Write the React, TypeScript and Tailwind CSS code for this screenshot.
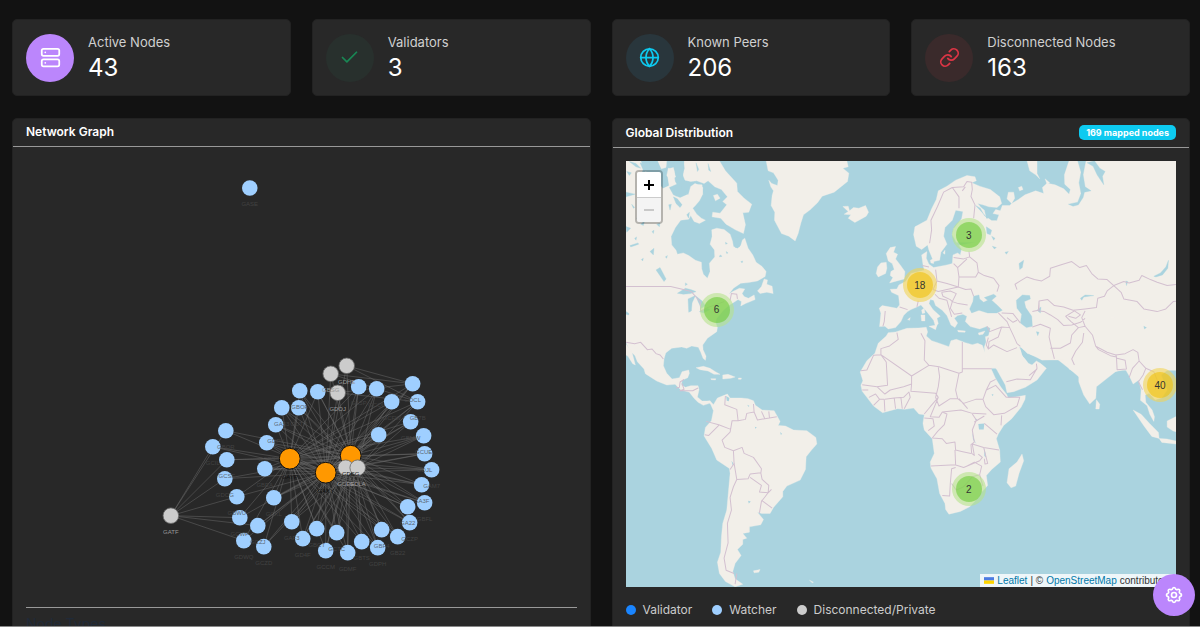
import { Check, Globe, Link as LinkIcon, Server } from 'lucide-react'
import { TbSettings } from 'react-icons/tb'

const STATS = [
  { label: 'Active Nodes', value: 43, icon: Server, style: 'bg-[#bb86fc] text-white' },
  { label: 'Validators', value: 3, icon: Check, style: 'bg-[#28302d] text-[#198754]' },
  { label: 'Known Peers', value: 206, icon: Globe, style: 'bg-[#29363c] text-[#0dcaf0]' },
  { label: 'Disconnected Nodes', value: 163, icon: LinkIcon, style: 'bg-[#3a2a2b] text-[#dc3545]' },
]

const LEGEND = [
  { label: 'Validator', color: 'bg-[#1a85ff]' },
  { label: 'Watcher', color: 'bg-[#9fcfff]' },
  { label: 'Disconnected/Private', color: 'bg-[#cccccc]' },
]

const CLUSTERS = [
  { count: 3, x: 343, y: 74, big: false },
  { count: 18, x: 294, y: 124, big: true },
  { count: 6, x: 91, y: 149, big: false },
  { count: 40, x: 534, y: 224, big: true },
  { count: 2, x: 343, y: 328, big: false },
]

type Node = [x: number, y: number, id: string]

const VALIDATORS: Node[] = [
  [351, 456, 'GDSG'], [290, 459, 'GAYP'], [326, 473, 'GAXY'],
]

// nodes around the three validators
const WATCHERS: Node[] = [
  [300, 391, 'GBOF'], [318, 392, ''], [359, 387, 'GA5P'], [377, 389, 'GCQL'], [413, 384, 'GDCL'],
  [418, 402, 'GB7B'], [392, 402, 'GCFW'], [411, 422, 'GBMW'], [379, 435, ''], [424, 436, 'GCUE'],
  [425, 454, 'GDJL'], [432, 470, 'GAM7'], [422, 485, 'GA3F'], [425, 503, 'GBFL'], [408, 507, 'GA22'],
  [410, 523, 'GCZP'], [398, 537, 'GB22'], [382, 530, 'GBF4'], [378, 548, 'GDPH'], [362, 542, 'GBTS'],
  [348, 553, 'GDMF'], [337, 533, 'GCTC'], [326, 551, 'GCCM'], [317, 529, 'GBCT'], [303, 539, 'GD4F'],
  [292, 522, 'GAF3'], [274, 498, 'GCKL'], [265, 469, 'GBEA'], [267, 443, 'GCPS'], [276, 425, 'GDPV'],
  [282, 408, 'GA53'], [299, 408, 'GDTR'],
]

const OUTER: Node[] = [
  [226, 431, 'GBOR'], [213, 447, 'GCIL'], [227, 460, 'GCSF'], [225, 479, 'GDCG'], [237, 497, 'GBWU'],
  [240, 518, 'GCWP'], [258, 526, 'GCZJ'], [244, 541, 'GDWQ'], [264, 547, 'GCZD'],
]

const PRIVATE: Node[] = [
  [347, 366, 'GDHE'], [331, 374, 'GBSG'], [338, 393, 'GDOJ'], [346, 468, 'GCEE'], [358, 468, 'GDLA'],
  [171, 516, 'GATF'],
]

const LONER: Node = [250, 188, 'GASE']

const EDGES: [Node, Node][] = [
  ...[...WATCHERS, ...OUTER].flatMap((w, i) =>
    VALIDATORS.filter((_, v) => w[0] > 260 || (i + v) % 3 !== 0).map(v => [w, v] as [Node, Node])),
  ...WATCHERS.flatMap((w, i) => [[w, PRIVATE[3 + (i % 2)]]] as [Node, Node][]),
  ...OUTER.slice(0, 8).map(w => [w, PRIVATE[5]] as [Node, Node]),
  ...PRIVATE.slice(0, 3).flatMap(p =>
    [WATCHERS[4], WATCHERS[5], VALIDATORS[0], VALIDATORS[2]].map(t => [p, t] as [Node, Node])),
]

function NetworkGraph() {
  return (
    <svg viewBox="13 147 577 460" className="block w-full" role="img" aria-label="Network graph">
      <g stroke="#707070" strokeOpacity="0.5" strokeWidth="0.9">
        {EDGES.map(([a, b], i) => <line key={i} x1={a[0]} y1={a[1]} x2={b[0]} y2={b[1]} />)}
      </g>
      <g fill="#9fcfff">
        {[LONER, ...OUTER, ...WATCHERS].map(([x, y]) => <circle key={`${x}-${y}`} cx={x} cy={y} r="7.8" />)}
      </g>
      <g fill="#ff9800" stroke="#111" strokeWidth="1">
        {VALIDATORS.map(([x, y]) => <circle key={x} cx={x} cy={y} r="10.4" />)}
      </g>
      <g fill="#cccccc" stroke="#666" strokeWidth="0.8">
        {PRIVATE.map(([x, y]) => <circle key={x} cx={x} cy={y} r="7.8" />)}
      </g>
      <g fontSize="6" textAnchor="middle" className="font-[Liberation_Sans]">
        <g fill="#484848" fillOpacity="0.8">
          {[LONER, ...OUTER, ...WATCHERS].map(([x, y, id]) => <text key={`${x}-${y}`} x={x} y={y + 18}>{id}</text>)}
        </g>
        <g fill="#111">
          {VALIDATORS.map(([x, y, id]) => <text key={id} x={x} y={y + 20}>{id}</text>)}
        </g>
        <g fill="#999">
          {PRIVATE.map(([x, y, id]) => <text key={id} x={x} y={y + 18}>{id}</text>)}
        </g>
      </g>
    </svg>
  )
}

const LAND = '#f2efe9'
const SEA = '#aad3df'

function WorldMap() {
  return (
    <svg viewBox="18 18 1650 1278" preserveAspectRatio="xMidYMid slice" className="block h-full w-full" role="img" aria-label="World map">
      <rect x="0" y="0" width="1700" height="1320" fill={SEA} />
      <g fill={LAND} stroke={LAND} strokeWidth="1" strokeLinejoin="round">
        {/* north and central america */}
        <path d="M18 18H62L70 40 62 62 78 50 90 66 88 92 112 88 130 98 145 90 140 62 145 40 160 50 165 80 175 98 160 110 168 125 185 112 205 120 212 95 225 86 248 98 246 122 238 138 226 152 218 160 230 178 244 190 256 196 238 206 222 200 212 182 206 193 182 196 166 218 153 245 155 270 168 286 172 298 190 294 206 302 226 316 244 322 245 342 250 358 262 370 270 350 268 325 284 306 283 285 270 268 276 245 275 225 290 220 312 224 330 238 337 258 340 275 352 281 362 272 367 255 374 250 384 280 398 300 408 322 426 335 438 350 435 365 412 378 385 383 362 385 340 400 326 418 338 410 358 400 374 402 366 416 372 425 385 430 402 420 405 434 376 446 362 453 364 440 354 434 338 444 328 450 310 466 290 490 286 502 292 518 290 530 262 550 248 570 249 584 258 604 256 616 249 610 242 592 235 577 215 573 200 580 185 576 155 580 137 594 132 612 130 632 140 655 156 672 178 668 186 650 206 645 208 655 203 668 186 676 184 690 196 697 212 692 234 692 237 704 232 726 246 738 260 738 270 737 280 750 268 745 250 751 234 742 222 730 208 712 182 704 165 688 140 690 110 678 76 656 72 642 52 620 45 602 28 585 18 562Z" />
        <path d="M18 568L36 592 46 630 38 626 24 604 18 600Z" />
        <path d="M190 18H298L316 48 350 85 352 110 372 130 395 148 386 172 368 174 376 210 370 236 346 225 318 208 302 190 276 186 278 172 300 175 320 150 308 140 322 126 304 104 284 96 264 78 252 86 230 78 212 80 195 76 188 60 194 40Z" />
        <path d="M112 18H140L138 38 124 42ZM144 42L160 38 168 66 155 72ZM280 122L292 118 300 130 286 138ZM222 88L246 90 248 120 232 110Z" />
        <path d="M438 18L444 48 460 54 474 76 472 92 455 86 446 76 452 96 460 108 456 122 453 152 464 172 463 196 484 236 506 244 525 258 534 236 542 205 550 180 570 165 592 144 606 124 642 112 682 80 686 55 668 40 684 36 680 18Z" />
        <path d="M668 155L684 154 688 168 700 158 716 160 736 152 745 172 738 184 704 203 684 190 692 180 672 178 684 170Z" />
        <path d="M412 408L424 395 432 372 442 375 440 388 456 394 459 416 440 412 420 416Z" />
        <path d="M228 638L250 634 270 640 286 650 300 658 282 658 264 648 240 644ZM308 660L324 658 345 666 332 670 308 672ZM272 671L287 671 286 675 274 674ZM355 669L364 669 363 673 355 673Z" />
      </g>
      <g fill={SEA} stroke={SEA} strokeWidth="1">
        {/* canadian straits and lakes */}
        <path d="M18 112L45 118 18 126ZM90 18L112 18 124 50 142 66 146 92 128 100 120 84 98 70 88 50ZM60 24L78 30 84 48 70 46ZM86 92L98 96 96 118 90 112ZM18 215L32 220 20 232ZM66 158L98 144 104 150 74 166ZM30 272L54 264 56 268 32 276ZM108 345L120 338 138 372 132 380ZM90 290L102 280 100 300ZM62 208L74 198 70 212ZM172 415L196 400 212 404 228 410 212 416 190 418ZM204 432L226 422 216 444 214 468 206 472ZM228 424L246 438 256 452 244 460 234 440ZM238 470L262 460 270 464 250 474ZM148 98L180 84 186 104 202 118 180 128 160 120ZM340 250L362 244 358 276 346 278Z" />
        <path d="M162 18H192L188 70 196 84 178 92 166 60ZM160 126L172 132 186 150 180 158 168 146ZM146 150L154 148 150 166ZM28 20L48 26 62 40 48 36ZM20 50L34 54 28 62ZM228 24L236 44 232 50ZM264 26L272 50 266 46Z" />
        <path d="M35 148L44 158 40 160ZM50 190L60 182 58 190ZM200 180L208 172 206 190ZM110 208L120 205 118 216ZM316 262L322 266 317 268ZM300 300L306 304 298 306ZM18 470L27 476 26 480 18 478ZM196 384L202 388 196 392ZM96 230L102 226 100 236ZM64 314L70 310 68 318ZM136 306L142 302 140 310ZM44 250L50 246 48 256ZM318 290L324 294 320 296ZM362 320L368 318 366 324Z" />
      </g>

      {/* europe and asia */}
      <g transform="translate(690 0)">
        <g fill={LAND} stroke={LAND} strokeWidth="1" strokeLinejoin="round">
          <path d="M350 62L374 66 378 78 364 84 388 94 420 104 448 126 454 146 440 158 416 156 398 150 382 146 392 158 402 166 408 192 424 186 440 196 446 180 428 176 436 164 450 168 456 152 478 152 484 146 470 132 474 112 490 112 493 130 484 146 504 134 524 120 556 108 580 116 576 98 590 85 614 90 640 102 656 118 660 104 643 88 642 60 656 18H986V646L930 645 800 646 738 680 700 678 655 640 620 612 575 615 540 598 512 575 500 640 405 640 402 575 414 545 420 520 410 514 388 522 360 515 345 500 350 484 338 478 322 482 312 490 322 504 314 518 302 510 290 482 276 466 256 452 250 436 240 434 236 446 248 464 270 484 260 490 264 506 256 516 250 496 226 466 212 450 200 456 182 464 172 470 160 482 152 500 136 518 114 522 104 514 88 515 92 475 87 460 96 452 140 460 148 450 145 422 124 412 120 403 140 402 146 390 166 380 182 356 206 350 222 346 218 328 214 300 230 290 228 310 236 328 250 338 290 330 306 326 308 300 322 294 330 300 334 282 326 272 375 262 340 262 318 262 306 240 310 222 334 192 338 170 316 166 306 196 284 218 280 244 290 268 272 292 268 316 250 320 236 286 232 270 214 284 198 274 190 240 194 216 230 196 244 162 258 134 264 108 290 94 316 76Z" />
          <path d="M120 278L136 275 130 292 142 298 136 312 150 330 164 350 162 372 140 378 118 384 128 368 120 362 122 350 132 344 126 326 114 318 108 296ZM82 336L92 324 108 322 110 340 106 356 84 366 78 356Z" />
          <path d="M530 18H560L560 56 568 72 556 60 538 48ZM584 72L598 84 590 88ZM504 98L514 94 518 104 508 108ZM214 465L222 460 224 474 216 476ZM212 480L224 480 224 498 214 498ZM236 514L260 510 256 524ZM322 526L345 528 344 532 324 531ZM384 534L404 528 398 538 386 540ZM172 494L180 488 178 496ZM240 316L252 310 250 326 242 324ZM278 294L284 286 284 298Z" />
          <path d="M405 545L415 605 440 645 465 690 470 713 490 710 525 697 560 675 588 640 570 625 558 618 545 630 534 625 515 600 510 575 530 595 560 605 575 615 640 615 655 630 656 642 672 650 685 645 685 680 700 720 718 747 736 730 738 695 770 670 795 650 825 643 838 666 848 687 865 675 872 705 870 736 890 752 898 778 910 799 912 785 905 765 886 742 884 720 896 715 914 734 934 728 950 705 940 680 932 660 950 646 986 644V500L640 480Z" />
          <path d="M738 734L748 748 746 762 736 762ZM848 765L872 778 898 806 924 832 926 850 904 844 880 812ZM926 850L950 852 986 860V868L934 862ZM950 798L978 784H986V832L968 828 950 816Z" />
        </g>
        <g fill={SEA} stroke={SEA} strokeWidth="1">
          <path d="M682 18L692 52 686 84 692 116 682 142 654 148 668 154 684 150 698 128 702 112 722 108 704 96 698 60 706 18ZM710 24L728 34 740 60 760 90 756 64 764 50 748 40 732 18ZM358 462L368 440 370 424 386 420 388 432 400 442 412 436 402 428 430 418 438 424 424 436 440 450 456 466 440 474 412 474 386 466 364 474ZM498 436L516 420 538 422 540 432 522 440 526 458 544 484 546 514 528 518 510 504 514 478 500 460ZM508 576L528 594 534 612 520 606ZM376 152L390 160 402 182 412 190 422 180 436 190 440 196 424 196 406 184ZM408 216L424 226 420 240 410 236ZM424 244L434 250 430 256ZM910 364L930 354 946 336 954 316 952 340 936 360 916 366ZM690 430L704 420 730 422 700 426 694 436ZM506 326L520 316 516 338 508 344ZM560 466L572 456 570 474ZM558 530L566 532 562 542ZM880 514L888 518 882 522ZM826 378L832 380 828 392ZM464 292L474 290 468 298ZM426 274L438 278 432 282Z" />
        </g>
        <g fill="none" stroke="#d3c0d0" strokeWidth="3" strokeLinejoin="round">
          <path d="M238 265L244 225 242 196 262 154 280 112 306 98 326 126 326 160M306 98L340 96 350 80 364 82 366 104 362 125 374 150 370 190M345 96L336 108M356 290L358 306 340 312 310 308M358 306L380 324 384 352 376 366 326 366 322 338 350 312M322 338L310 326M256 344L260 378 290 386 324 396 326 366M260 378L248 404 264 410 290 404 324 396M384 352L402 362 430 370 446 392 440 410M324 396L346 404 362 402 370 424M274 412L300 408 318 416 306 440 324 446 352 450M274 412L278 424 300 434 306 440 300 460 312 478 336 474M254 418L266 430 290 436 296 458M296 458L304 486M200 456L204 438M105 468L102 500 98 514M148 456L172 464M216 332L236 336" />
          <path d="M500 404L494 388 510 378 530 366 552 374 574 378 598 364 600 340 630 330 664 320 688 338 708 332 724 356 742 372 770 374 790 392 770 408 762 424 742 430 738 458 704 462 668 466 640 456 612 452 592 434 566 438 564 466 546 470M790 392L820 380 836 384 866 376 874 362 900 374 920 382 950 392 986 388M790 392L812 412 820 432 860 440 880 462 920 470 946 462 968 440 986 438M566 438L566 468 582 470 600 480 622 494 640 512 664 510 690 502 704 490M546 516L570 508 600 520 596 546 604 580 612 612M600 580L630 580 660 564 664 540 684 518 704 514 726 540 736 574 770 592 796 600 824 596 848 584 862 592 866 618 846 640 836 668M684 518L662 500 646 484 672 468 690 480 676 490 654 484M704 514L694 488 704 468M700 534L696 562 676 588 664 612 672 630M736 574L744 584 780 602 798 606 796 598M798 606L800 644 828 642 824 616 800 610M866 618L886 640 878 660 864 680 876 704M886 640L910 650 922 680 914 704" />
          <path d="M410 514L418 530 454 516 478 518 470 500 444 474M454 474L488 476 510 504M470 488L488 502 500 496M478 518L492 548 500 566 510 574M454 516L444 546 416 560 414 582 430 570 470 590 500 578M414 582L408 570 414 548M468 680L500 672 540 674 560 640 558 626M536 662L560 642" />
        </g>
      </g>

      {/* africa */}
      <g transform="translate(690 465)">
        <path fill={LAND} stroke={LAND} d="M108 78L114 68 136 66 170 55 206 54 228 52 232 66 228 78 244 92 262 98 296 110 302 92 318 88 345 98 366 104 382 100 396 106 402 122 412 150 425 182 436 206 452 232 468 252 474 264 500 260 525 256 524 268 512 292 484 326 460 346 444 372 438 386 448 420 450 456 424 478 408 496 412 526 394 546 384 562 358 590 330 604 296 612 286 598 284 580 268 550 260 506 242 474 240 456 252 430 246 386 222 360 218 340 222 314 206 312 190 294 164 298 142 296 97 308 70 288 50 262 36 244 32 226 38 212 30 186 50 152 74 130 84 100ZM515 432L520 452 506 490 496 528 482 533 470 518 476 476 500 456Z" />
        <path fill={SEA} d="M384 342L402 340 400 358 386 358ZM366 366L372 390 378 402 368 388ZM402 414L408 442 402 438ZM378 326L382 332 374 330ZM424 252L430 254 426 258Z" />
        <path fill="none" stroke="#d3c0d0" strokeWidth="3" strokeLinejoin="round" d="M140 68L144 88 118 108 92 116 92 134 70 136 50 180 32 182M92 134L184 198 236 166 222 150 224 92 212 70M236 166L266 170 326 190 336 186 336 96M336 176H424M326 190L316 240 322 266 300 266 266 288 256 262 264 230 268 200 264 172M184 198L184 222 160 230 120 240 104 252 80 230 36 224M92 134L108 156 112 226 80 230M36 240L54 240M56 262L76 252 88 268 70 286M88 268L102 268 104 304M104 268L132 264 160 262 176 246 180 262 162 296M132 264L136 296M152 262L156 296M184 222L182 244 256 250 264 262 240 290 222 312M264 262L240 320 266 322 276 306 332 300 366 310 408 312M322 266L340 280 376 268 398 268 406 290 430 314 462 310 500 288 508 262 468 262M326 266L352 296M408 240L398 268M408 240L420 216 436 208M408 240L436 226 468 262M452 346L454 316M222 324L248 326 252 348 234 362M276 306L290 312 282 344 262 364 246 384M246 384L276 386 288 400 314 396 316 420 334 424 362 430M366 312L378 330 366 360 372 396 362 404 364 430 372 436 366 402 400 412 446 420M372 336L402 318M314 420L316 464 242 468M314 464L340 472 388 452 396 442 384 432M316 472L304 476 300 520 298 558 276 556M304 520L318 540 340 530 366 500 388 494 394 468 372 456 342 472M388 494L398 528M400 412L408 444 412 460 404 462 402 446M402 340L440 372" />
      </g>

      {/* south america */}
      <g transform="translate(0 615)">
        <path fill={LAND} stroke={LAND} d="M268 124L280 134 292 114 312 106 322 102 330 114 364 114 384 116 400 122 406 136 426 150 462 152 480 184 474 196 496 198 520 210 560 212 587 232 590 252 574 270 558 290 556 328 540 360 500 378 488 394 488 410 460 442 450 460 425 460 412 456 430 478 422 494 388 500 388 516 368 520 380 534 368 538 368 552 352 568 363 586 345 610 338 634 345 656 368 672 345 680 316 664 298 640 292 606 302 576 304 530 308 490 320 450 330 340 328 325 290 300 275 265 252 228 256 202 274 182 280 152ZM400 632L420 628 416 636 402 638ZM568 660L580 666 576 668Z" />
        <path fill={SEA} d="M318 108L328 114 326 124 320 122ZM384 422L392 424 386 430ZM334 302L340 310 338 316ZM480 216L486 222 482 224ZM382 134L388 138 384 140ZM404 200L410 202 406 206Z" />
        <path fill="none" stroke="#d3c0d0" strokeWidth="3" strokeLinejoin="round" d="M168 84L178 82 180 66 192 58M186 70L192 88 180 92 218 92 234 84M316 108L314 134 350 148 354 182 336 182 330 216M258 184L296 194 332 208M296 196L266 226 254 224M330 216L306 240 314 262 340 272 342 310 330 328M354 182L376 178 380 160 402 156 400 132M402 156L412 180 434 176 424 154M434 176L448 174 446 154M448 174L470 170M340 272L366 262 372 280 400 292 424 326 422 340M342 310L350 358 384 356 390 342 422 338 426 358 446 376 444 398 418 396 424 376 390 352M350 358L340 380 330 412 334 450 322 490 324 548 312 594 318 630 342 640M444 398L454 388M424 420L456 444M444 398L424 424 418 458M350 640L345 672" />
      </g>

      <path fill="none" stroke="#d3c0d0" strokeWidth="3" d="M18 395H152L190 404 214 410 240 440 242 468 262 458M262 458L312 440M330 436L334 416 350 418 352 432M18 562L44 566 62 562 82 584 96 582 108 596 120 600 130 612" />
    </svg>
  )
}

function Cluster({ count, x, y, big }: { count: number; x: number; y: number; big: boolean }) {
  return (
    <div
      className={`absolute flex h-[34px] w-[34px] -translate-x-1/2 -translate-y-1/2 items-center justify-center rounded-full ${big ? 'bg-[#f1d357]/60' : 'bg-[#b5e28c]/60'}`}
      style={{ left: `${x / 5.5}%`, top: `${y / 4.26}%` }}
    >
      <div className={`flex h-[26px] w-[26px] items-center justify-center rounded-full font-[Liberation_Sans,sans-serif] text-[10px] text-[#333] ${big ? 'bg-[#f0c20c]/60' : 'bg-[#6ecc39]/60'}`}>
        {count}
      </div>
    </div>
  )
}

export default function App() {
  return (
    <div className="h-screen overflow-hidden border-b border-[#888] bg-[#121212] pl-3 pr-[10px] pt-[19px] font-[Inter,sans-serif] text-white">
      <div className="grid grid-cols-4 gap-[21px]">
        {STATS.map(({ label, value, icon: Icon, style }) => (
          <div key={label} className="flex h-[77px] items-center gap-[14px] rounded-[5px] border border-[#222] bg-[#282828] px-[13px]">
            <div className={`flex h-12 w-12 shrink-0 items-center justify-center rounded-full ${style}`}>
              <Icon size={21} />
            </div>
            <div>
              <div className="text-[13px] leading-5 text-[#d0d0d0]">{label}</div>
              <div className="text-2xl leading-8">{value}</div>
            </div>
          </div>
        ))}
      </div>

      <div className="mt-[22px] grid grid-cols-2 items-start gap-[21px]">
        <section className="rounded-t-[5px] border border-[#222] bg-[#282828]">
          <h2 className="border-b border-[#999] px-[13px] pb-1 pt-[3px] text-xs font-semibold leading-5">Network Graph</h2>
          <NetworkGraph />
          <div className="mx-[13px] h-40 border-t border-[#999] pt-[6px] text-sm leading-5 text-[#202a38]">Node Types</div>
        </section>

        <section className="rounded-t-[5px] border border-[#222] bg-[#282828]">
          <div className="flex items-center justify-between border-b border-[#999] px-[13px] pb-1 pt-[3px]">
            <h2 className="text-xs font-semibold leading-[21px]">Global Distribution</h2>
            <span className="rounded-[5px] bg-[#0dcaf0] px-[7px] text-[9px] font-bold leading-[15px]">169 mapped nodes</span>
          </div>
          <div className="px-[13px] pt-[13px]">
            <div className="relative h-[426px] overflow-hidden">
              <WorldMap />
              <div className="absolute left-[9px] top-[9px] overflow-hidden rounded border-2 border-black/25">
                <button aria-label="Zoom in" className="flex h-[26px] w-6 items-center justify-center border-b border-[#ccc] bg-white">
                  <svg viewBox="0 0 12 12" className="h-3 w-3"><path d="M6 1v10M1 6h10" stroke="#000" strokeWidth="2" /></svg>
                </button>
                <button aria-label="Zoom out" disabled className="flex h-6 w-6 items-center justify-center bg-[#f4f4f4]">
                  <svg viewBox="0 0 12 12" className="h-3 w-3"><path d="M1 6h10" stroke="#bbb" strokeWidth="1.5" /></svg>
                </button>
              </div>
              {CLUSTERS.map(c => <Cluster key={c.count} {...c} />)}
              <div className="absolute bottom-0 right-0 flex items-center gap-[3px] bg-white/80 px-1 font-[Liberation_Sans,sans-serif] text-[10px] leading-[13px] text-[#333]">
                <svg viewBox="0 0 12 8" className="h-[7px] w-[10px]">
                  <path fill="#4c7be1" d="M0 0h12v4H0z" />
                  <path fill="#ffd500" d="M0 4h12v4H0z" />
                </svg>
                <a href="#leaflet" className="text-[#0078a8]">Leaflet</a>
                <span>| ©</span>
                <a href="#osm" className="text-[#0078a8]">OpenStreetMap</a>
                <span>contributors</span>
              </div>
            </div>
            <ul className="flex h-40 gap-5 pt-[13px] text-xs leading-5 text-[#ccc]">
              {LEGEND.map(({ label, color }) => (
                <li key={label} className="flex h-5 items-center gap-[7px]">
                  <span className={`h-[10px] w-[10px] rounded-full ${color}`} />
                  {label}
                </li>
              ))}
            </ul>
          </div>
        </section>
      </div>

      <button aria-label="Settings" className="fixed bottom-[11px] right-[5px] flex h-[42px] w-[42px] items-center justify-center rounded-full bg-[#bb86fc] text-white">
        <TbSettings size={20} />
      </button>
    </div>
  )
}
